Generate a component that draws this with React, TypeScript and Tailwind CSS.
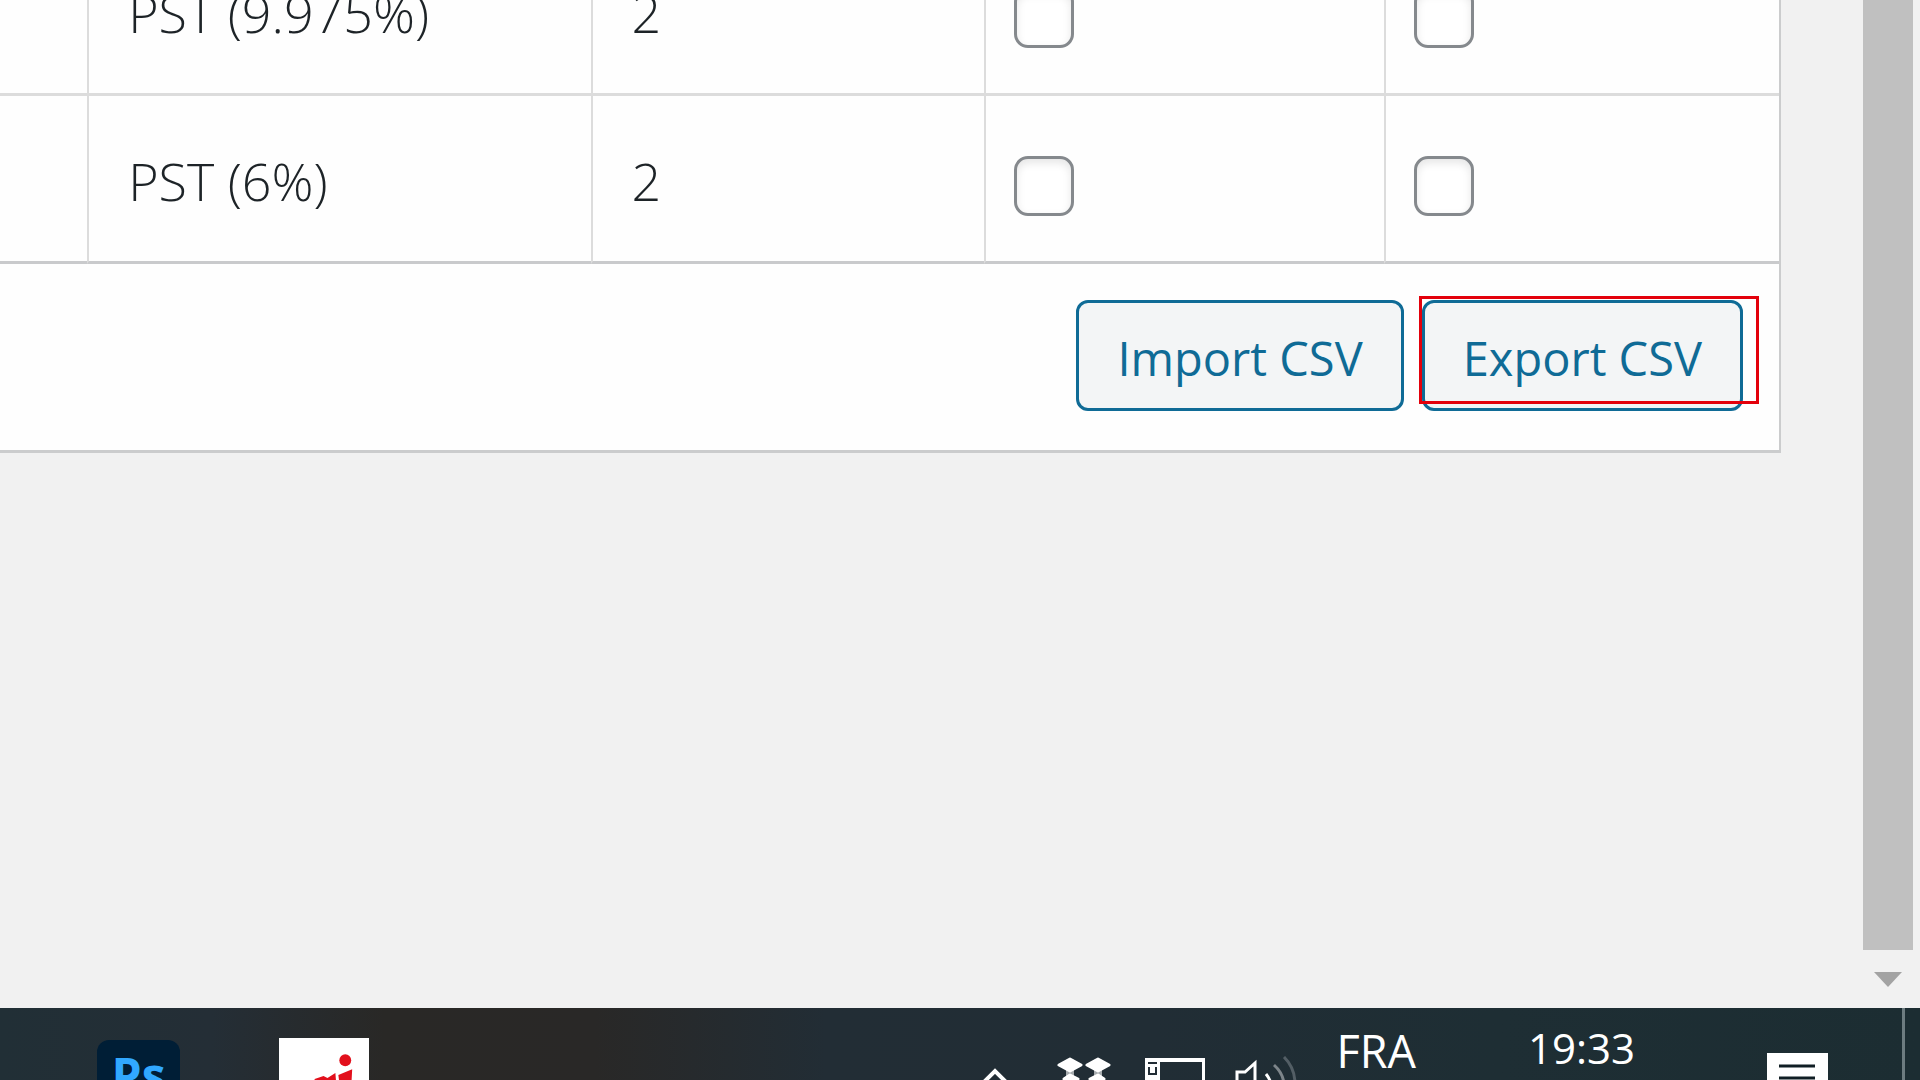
import React from 'react';

interface TaxRow {
  name: string;
  priority: string;
}

const rows: TaxRow[] = [
  { name: 'PST (9.975%)', priority: '2' },
  { name: 'PST (6%)', priority: '2' },
];

function TaxCheckbox({ label }: { label: string }) {
  return (
    <input
      type="checkbox"
      aria-label={label}
      className="block w-[60px] h-[60px] mt-[14px] appearance-none rounded-[14px] border-[3px] border-[#85898d] bg-white shadow-[inset_0_4px_8px_rgba(0,0,0,0.1)] checked:bg-[#2271b1]"
    />
  );
}

function TaxTable() {
  return (
    <div className="h-[264px] flex flex-col justify-end overflow-hidden">
      <table className="w-full shrink-0 table-fixed border-separate border-spacing-0 text-[52px] leading-[72px] font-light text-[#1d2327]">
        <colgroup>
          <col className="w-[4.9%]" />
          <col className="w-[28.3%]" />
          <col className="w-[22.1%]" />
          <col className="w-[22.5%]" />
          <col className="w-[22.2%]" />
        </colgroup>
        <tbody className="[&>tr:last-child>td]:border-b-[#c9cacc]">
          {rows.map((row) => (
            <tr key={row.name} className="h-[168px] [&>td]:border-b-[3px] [&>td]:border-b-[#dcdcdc]">
              <td></td>
              <td className="pt-1 pl-[39px] border-l-2 border-[#dcdcdc]">{row.name}</td>
              <td className="pt-1 pl-[39px] border-l-2 border-[#dcdcdc]">{row.priority}</td>
              <td className="pl-7 border-l-2 border-[#dcdcdc]">
                <TaxCheckbox label={`Compound, ${row.name}`} />
              </td>
              <td className="pl-7 border-l-2 border-[#dcdcdc]">
                <TaxCheckbox label={`Shipping, ${row.name}`} />
              </td>
            </tr>
          ))}
        </tbody>
      </table>
    </div>
  );
}

function CsvButton({ children }: { children: React.ReactNode }) {
  return (
    <button
      type="button"
      className="h-[111px] px-[38px] pt-1 rounded-[12px] border-[3px] border-[#0f6b96] bg-[#f3f5f6] text-[47px] leading-[60px] text-[#0f6b96] whitespace-nowrap"
    >
      {children}
    </button>
  );
}

function Scrollbar() {
  return (
    <div className="w-[64px] shrink-0 flex flex-col items-center bg-[#f1f1f1]">
      <div className="w-[50px] flex-1 bg-[#c0c0c0]"></div>
      <svg className="w-7 h-[58px] shrink-0" viewBox="0 0 28 58">
        <path d="M0 22h28L14 37z" fill="#a3a3a3" />
      </svg>
    </div>
  );
}

function Taskbar() {
  return (
    <footer className="h-[72px] shrink-0 flex items-start overflow-hidden bg-[linear-gradient(90deg,#212f36_0%,#242e36_11%,#292826_20%,#292827_31%,#222d35_43%,#212d35_60%,#1e2e34_78%,#1c2d32_100%)] text-white">
      <button
        type="button"
        aria-label="Photoshop"
        className="ml-[97px] mt-8 w-[83px] h-[83px] shrink-0 rounded-[12px] bg-[#001e36] text-[48px] leading-[70px] font-bold text-[#31a8ff] flex justify-center items-start"
      >
        Ps
      </button>
      <button type="button" aria-label="NRJ" className="ml-[99px] mt-[30px] w-[90px] h-[91px] shrink-0 bg-white">
        <svg className="w-full h-full" viewBox="0 0 91 91" fill="#e2101c">
          <circle cx="67" cy="22" r="6" />
          <path d="M60 37 74 31 73 50 65 68 54 72 62 52z" />
          <path d="M36 41 45 38 49 40 57 35 58 47 50 49 46 66 36 68z" />
        </svg>
      </button>

      <div className="ml-auto flex items-start">
        <svg className="w-6 h-4 mt-[60px] mr-[49px]" viewBox="0 0 24 16" fill="none" stroke="#fff" strokeWidth="4">
          <path d="M1 14 12 3l11 11" />
        </svg>
        <svg className="w-14 h-7 mt-12 mr-[33px]" viewBox="0 0 56 28" fill="#fff">
          <path
            d="M3 9 14 3l11 6-11 6zM31 9 42 3l11 6-11 6zM8 23l6-4 8 4-8 6zM34 23l8-4 6 4-6 6z"
            stroke="#fff"
            strokeWidth="3"
            strokeLinejoin="round"
          />
          <path d="M10 13h8v8h-8zM38 13h8v8h-8z" fillOpacity="0.6" />
        </svg>
        <svg className="w-[60px] h-[30px] mt-[50px] mr-[30px]" viewBox="0 0 60 30">
          <path d="M0 0h60v30h-3V4H15v26H0z" fill="#fff" />
          <path d="M3 5h9M4 9v7h7V9" fill="none" stroke="#222d35" strokeWidth="2" />
        </svg>
        <svg className="w-[62px] h-7 mt-12 mr-[39px]" viewBox="0 0 62 28" fill="none" stroke="#fff" strokeWidth="3">
          <path d="M2 28V16h8L20 7v21" />
          <path d="M31 18q4 5 5 10" />
          <path d="M39 9q9 8 10 19" stroke="#7d858a" />
          <path d="M49 1q11 11 11 27" stroke="#535e65" />
        </svg>
        <span className="mt-[13px] mr-[112px] text-[45px] leading-[60px]">FRA</span>
        <time className="mt-[10px] mr-[132px] text-[42px] leading-[60px]">19:33</time>
        <svg className="w-[61px] h-7 mt-[45px] mr-[74px]" viewBox="0 0 61 28">
          <path d="M0 0h61v28H0z" fill="#fff" />
          <path d="M12 13h36M12 25h36" stroke="#101e24" strokeWidth="3" />
        </svg>
        <div className="w-[3px] h-[72px] mr-[15px] bg-[#6d7c80]"></div>
      </div>
    </footer>
  );
}

export default function App() {
  return (
    <div className="min-h-screen flex flex-col bg-[#f1f1f1] font-['Open_Sans','Noto_Sans',sans-serif]">
      <div className="flex-1 flex">
        <main className="flex-1 pr-[75px]">
          <section className="border-r-2 border-b-[3px] border-[#cbcccd] bg-[#fefefe]">
            <TaxTable />
            <div className="flex justify-end gap-[18px] pt-9 pr-[36px] pb-[39px]">
              <CsvButton>Import CSV</CsvButton>
              <div className="relative">
                <CsvButton>Export CSV</CsvButton>
                {/* highlight drawn over the export button */}
                <div className="absolute -top-1 -left-[3px] -right-4 h-[108px] border-[3px] border-[#e3000b] pointer-events-none"></div>
              </div>
            </div>
          </section>
        </main>
        <Scrollbar />
      </div>
      <Taskbar />
    </div>
  );
}
